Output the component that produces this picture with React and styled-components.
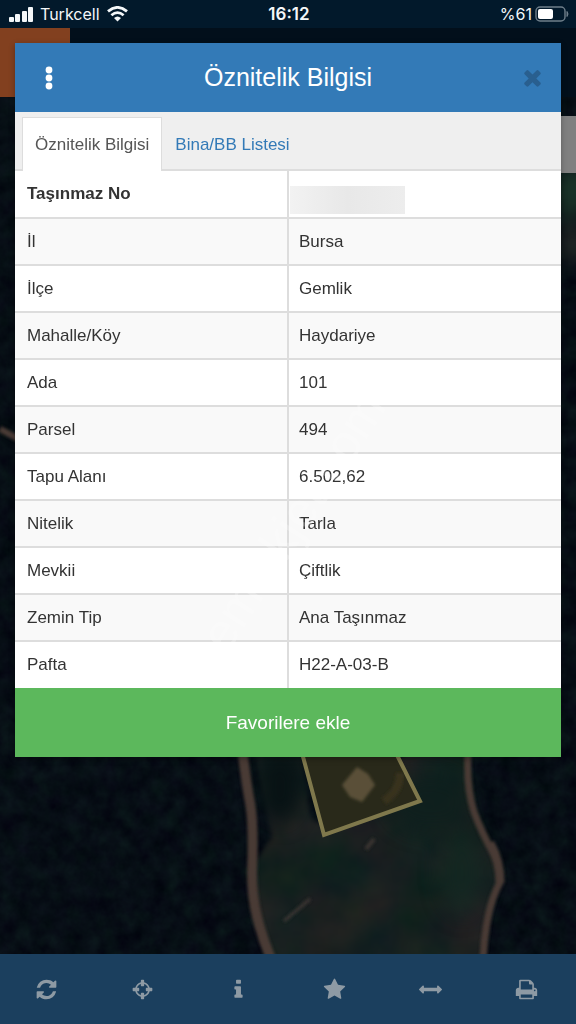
import React from "react";
import styled, { createGlobalStyle } from "styled-components";

const ROWS = [
	{ name: "Taşınmaz No", hidden: true },
	{ name: "İl", value: "Bursa" },
	{ name: "İlçe", value: "Gemlik" },
	{ name: "Mahalle/Köy", value: "Haydariye" },
	{ name: "Ada", value: "101" },
	{ name: "Parsel", value: "494" },
	{ name: "Tapu Alanı", value: "6.502,62" },
	{ name: "Nitelik", value: "Tarla" },
	{ name: "Mevkii", value: "Çiftlik" },
	{ name: "Zemin Tip", value: "Ana Taşınmaz" },
	{ name: "Pafta", value: "H22-A-03-B" },
];

const ICONS = {
	refresh:
		"M1639 1056q0 5-1 7-64 268-268 434.5t-478 166.5q-146 0-282.5-55t-243.5-157l-129 129q-19 19-45 19t-45-19-19-45v-448q0-26 19-45t45-19h448q26 0 45 19t19 45-19 45l-137 137q71 66 161 102t187 36q134 0 250-65t186-179q11-17 53-117 8-23 30-23h192q13 0 22.5 9.5t9.5 22.5zm25-800v448q0 26-19 45t-45 19h-448q-26 0-45-19t-19-45 19-45l138-138q-148-137-349-137-134 0-250 65t-186 179q-11 17-53 117-8 23-30 23h-199q-13 0-22.5-9.5t-9.5-22.5v-7q65-268 270-434.5t480-166.5q146 0 284 55.5t245 156.5l130-129q19-19 45-19t45 19 19 45z",
	crosshairs:
		"M1325 1024h-109q-26 0-45-19t-19-45v-128q0-26 19-45t45-19h109q-32-108-112.5-188.5t-188.5-112.5v109q0 26-19 45t-45 19h-128q-26 0-45-19t-19-45v-109q-108 32-188.5 112.5t-112.5 188.5h109q26 0 45 19t19 45v128q0 26-19 45t-45 19h-109q32 108 112.5 188.5t188.5 112.5v-109q0-26 19-45t45-19h128q26 0 45 19t19 45v109q108-32 188.5-112.5t112.5-188.5zm339-192v128q0 26-19 45t-45 19h-143q-37 161-154.5 278.5t-278.5 154.5v143q0 26-19 45t-45 19h-128q-26 0-45-19t-19-45v-143q-161-37-278.5-154.5t-154.5-278.5h-143q-26 0-45-19t-19-45v-128q0-26 19-45t45-19h143q37-161 154.5-278.5t278.5-154.5v-143q0-26 19-45t45-19h128q26 0 45 19t19 45v143q161 37 278.5 154.5t154.5 278.5h143q26 0 45 19t19 45z",
	info: "M1216 1344v128q0 26-19 45t-45 19h-512q-26 0-45-19t-19-45v-128q0-26 19-45t45-19h64v-384h-64q-26 0-45-19t-19-45v-128q0-26 19-45t45-19h384q26 0 45 19t19 45v576h64q26 0 45 19t19 45zm-128-1152v192q0 26-19 45t-45 19h-256q-26 0-45-19t-19-45v-192q0-26 19-45t45-19h256q26 0 45 19t19 45z",
	star: "M1728 647q0 22-26 48l-363 354 86 500q1 7 1 20 0 21-10.5 35.5t-30.5 14.5q-19 0-40-12l-449-236-449 236q-22 12-40 12-21 0-31.5-14.5t-10.5-35.5q0-6 2-20l86-500-364-354q-25-27-25-48 0-37 56-46l502-73 225-455q19-41 49-41t49 41l225 455 502 73q56 9 56 46z",
	arrows:
		"M1792 896q0 26-19 45l-256 256q-19 19-45 19t-45-19-19-45v-128h-1024v128q0 26-19 45t-45 19-45-19l-256-256q-19-19-19-45t19-45l256-256q19-19 45-19t45 19 19 45v128h1024v-128q0-26 19-45t45-19 45 19l256 256q19 19 19 45z",
	print:
		"M448 1536h896v-256h-896v256zm0-640h896v-384h-160q-40 0-68-28t-28-68v-160h-640v640zm1152 64q0-26-19-45t-45-19-45 19-19 45 19 45 45 19 45-19 19-45zm128 0v416q0 13-9.5 22.5t-22.5 9.5h-224v160q0 40-28 68t-68 28h-960q-40 0-68-28t-28-68v-160h-224q-13 0-22.5-9.5t-9.5-22.5v-416q0-79 56.5-135.5t135.5-56.5h64v-544q0-40 28-68t68-28h672q40 0 88 20t76 48l152 152q28 28 48 76t20 88v256h64q79 0 135.5 56.5t56.5 135.5z",
	times:
		"M1490 1322q0 40-28 68l-136 136q-28 28-68 28t-68-28l-294-294-294 294q-28 28-68 28t-68-28l-136-136q-28-28-28-68t28-68l294-294-294-294q-28-28-28-68t28-68l136-136q28-28 68-28t68 28l294 294 294-294q28-28 68-28t68 28l136 136q28 28 28 68t-28 68l-294 294 294 294q28 28 28 68z",
};

const TOOLS = [
	{ icon: "refresh", label: "Yenile" },
	{ icon: "crosshairs", label: "Konum" },
	{ icon: "info", label: "Bilgi" },
	{ icon: "star", label: "Favoriler" },
	{ icon: "arrows", label: "Ölçüm" },
	{ icon: "print", label: "Yazdır" },
];

function Icon({ name, size }) {
	return (
		<svg width={size} height={size} viewBox='0 0 1792 1792' fill='currentColor' aria-hidden='true'>
			<path d={ICONS[name]} />
		</svg>
	);
}

function Status() {
	return (
		<StatusBar>
			<Carrier>
				<svg width='24' height='15' viewBox='0 0 24 15' fill='currentColor'>
					<rect x='0' y='10' width='5' height='5' rx='1' />
					<rect x='6' y='7' width='5' height='8' rx='1' />
					<rect x='13' y='4' width='5' height='11' rx='1' />
					<rect x='19' y='0' width='5' height='15' rx='1' />
				</svg>
				<span>Turkcell</span>
				<svg width='21' height='16' viewBox='0 0 21 16' fill='none' stroke='currentColor'>
					<path d='M1 5.4Q10.5-2.6 20 5.4' strokeWidth='2.8' />
					<path d='M4.4 9.2Q10.5 4 16.6 9.2' strokeWidth='2.8' />
					<path d='M7 12Q10.5 8.800 14 12L10.5 15.600Z' fill='currentColor' stroke='none' />
				</svg>
			</Carrier>
			<Clock>16:12</Clock>
			<Battery>
				<span>%61</span>
				<svg width='34' height='16' viewBox='0 0 34 16'>
					<rect x='1' y='1' width='29' height='14' rx='4' fill='none' stroke='#6f7f8b' strokeWidth='1.4' />
					<rect x='3' y='3' width='15' height='10' rx='2' fill='#fff' />
					<path d='M32 5.5q2 2.500 0 5z' fill='#6f7f8b' stroke='#6f7f8b' />
				</svg>
			</Battery>
		</StatusBar>
	);
}

function SatelliteMap() {
	return (
		<MapSvg viewBox='0 0 576 857' preserveAspectRatio='xMidYMid slice' aria-hidden='true'>
			<defs>
				<filter id='trees' x='0' y='0' width='100%' height='100%' colorInterpolationFilters='sRGB'>
					<feTurbulence type='fractalNoise' baseFrequency='0.06' numOctaves='4' seed='8' />
					<feColorMatrix values='0.05 0 0 0 0  0.08 0.05 0 0 -0.012  0.07 0 0 0 0.045  0 0 0 0 1' />
				</filter>
				<filter id='ground' x='0' y='0' width='100%' height='100%' colorInterpolationFilters='sRGB'>
					<feTurbulence type='fractalNoise' baseFrequency='0.02' numOctaves='4' seed='3' />
					<feColorMatrix values='0.14 0 0 0 0.02  0.03 0.05 0 0 0.085  0.03 0 0.03 0 0.09  0 0 0 0 1' result='noise' />
					<feComposite in='noise' in2='SourceGraphic' operator='in' />
					<feGaussianBlur stdDeviation='2' />
				</filter>
				<filter id='soft' x='-20%' y='-20%' width='140%' height='140%'>
					<feGaussianBlur stdDeviation='1.5' />
				</filter>
				<filter id='softer' x='-50%' y='-50%' width='200%' height='200%' colorInterpolationFilters='sRGB'>
					<feGaussianBlur stdDeviation='10' />
				</filter>
			</defs>
			<rect width='576' height='857' filter='url(#trees)' />
			<path
				d='M252 640L300 650 310 720 330 735 410 650 468 655 474 715 492 752 500 785 490 815 483 870H270L254 810 252 770 272 740Z'
				filter='url(#ground)'
			/>
			<g filter='url(#softer)'>
				<ellipse cx='280' cy='690' rx='20' ry='36' fill='#071214' />
				<ellipse cx='430' cy='705' rx='42' ry='30' fill='#0c1f1d' opacity='0.8' />
				<ellipse cx='462' cy='775' rx='22' ry='44' fill='#132a22' opacity='0.7' />
				<ellipse cx='572' cy='95' rx='18' ry='28' fill='#1b3529' />
				<ellipse cx='572' cy='145' rx='12' ry='20' fill='#272b28' />
			</g>
			<g fill='none' stroke='#493b35' strokeLinejoin='round' filter='url(#soft)'>
				<path d='M242 650Q246 685 250 706T252 776Q252 800 257 820T271 862' strokeWidth='10' />
				<path d='M468 655Q466 690 474 715Q482 736 491 752T500 785Q492 800 488 820T483 862' strokeWidth='7' />
				<path d='M490 746Q500 764 500 786' strokeWidth='9' />
				<path d='M0 332L24 345' strokeWidth='6' />
				<path d='M284 824L310 802' strokeWidth='3' stroke='#3a3632' />
				<path d='M366 752L374 742' strokeWidth='4' stroke='#3a3632' />
			</g>
			<path d='M302 656L324 738 420 704 396 656Z' fill='#29291a' stroke='#7f784c' strokeWidth='4' />
			<path d='M357 670L368 677 375 688 362 705 350 700 342 688Z' fill='#5a5037' filter='url(#soft)' />
			<path d='M384 704Q400 694 400 676' fill='none' stroke='#38331f' strokeWidth='8' filter='url(#soft)' />
		</MapSvg>
	);
}

function App() {
	return (
		<Screen>
			<GlobalStyle />
			<Status />
			<Stage>
				<SiteHeader>
					<MenuBlock />
				</SiteHeader>
				<MapArea>
					<SatelliteMap />
					<MapControl />
				</MapArea>
				<Toolbar>
					{TOOLS.map((item) => (
						<ToolButton key={item.icon} aria-label={item.label}>
							<Icon name={item.icon} size={23} />
						</ToolButton>
					))}
				</Toolbar>
				<Dialog role='dialog' aria-labelledby='dialog-title'>
					<DialogHeader>
						<HeaderButton aria-label='Menü'>
							<svg width='8' height='24' viewBox='0 0 8 24' fill='currentColor'>
								<circle cx='4' cy='4' r='3.4' />
								<circle cx='4' cy='12' r='3.4' />
								<circle cx='4' cy='20' r='3.4' />
							</svg>
						</HeaderButton>
						<Title id='dialog-title'>Öznitelik Bilgisi</Title>
						<CloseButton aria-label='Kapat'>
							<Icon name='times' size={25} />
						</CloseButton>
					</DialogHeader>
					<Tabs role='tablist'>
						<Tab role='tab' aria-selected='true' $active>
							Öznitelik Bilgisi
						</Tab>
						<Tab role='tab' aria-selected='false'>
							Bina/BB Listesi
						</Tab>
					</Tabs>
					<Table>
						<tbody>
							{ROWS.map((row) => (
								<Row key={row.name}>
									<Name scope='row' $bold={row.hidden}>
										{row.name}
									</Name>
									<Value $hidden={row.hidden}>{row.hidden ? <Redacted /> : row.value}</Value>
								</Row>
							))}
						</tbody>
					</Table>
					<FavoriteButton>Favorilere ekle</FavoriteButton>
					<Watermark>emlakjet.com</Watermark>
				</Dialog>
			</Stage>
		</Screen>
	);
}

export default App;

const GlobalStyle = createGlobalStyle`
	* {
		box-sizing: border-box;
	}

	body {
		margin: 0;
		background: #050d13;
		font-family: "Liberation Sans", Arial, sans-serif;
	}

	button {
		margin: 0;
		padding: 0;
		border: 0;
		background: none;
		font-family: inherit;
		cursor: pointer;
	}
`;

const Screen = styled.div`
	display: flex;
	flex-direction: column;
	min-height: 100vh;
`;

const StatusBar = styled.div`
	display: grid;
	grid-template-columns: 1fr auto 1fr;
	align-items: center;
	height: 28px;
	padding: 0 7px 0 9px;
	background: #02192b;
	color: #f4f7f9;
	font-family: Inter, sans-serif;
	font-size: 16px;
`;

const Carrier = styled.div`
	display: flex;
	align-items: center;
	gap: 7px;
`;

const Clock = styled.div`
	font-size: 17px;
	font-weight: 600;
`;

const Battery = styled.div`
	display: flex;
	align-items: center;
	justify-content: flex-end;
	gap: 3px;
`;

const Stage = styled.div`
	position: relative;
	display: flex;
	flex-direction: column;
	flex: 1;
`;

const SiteHeader = styled.div`
	display: flex;
	height: 69px;
	background: #020f1b;
`;

const MenuBlock = styled.div`
	width: 70px;
	background: #82401f;
`;

const MapArea = styled.div`
	position: relative;
	flex: 1;
	overflow: hidden;
`;

const MapSvg = styled.svg`
	position: absolute;
	top: 0;
	left: 0;
	width: 100%;
	height: 100%;
`;

const MapControl = styled.div`
	position: absolute;
	top: 19px;
	right: 0;
	width: 56px;
	height: 57px;
	background: #808080;
`;

const Toolbar = styled.div`
	display: grid;
	grid-template-columns: repeat(6, 1fr);
	height: 70px;
	background: #1b3f5e;
`;

const ToolButton = styled.button`
	display: flex;
	align-items: center;
	justify-content: center;
	padding-right: 4px;
	color: #8e9aa4;
`;

const Dialog = styled.div`
	position: absolute;
	top: 15px;
	left: 15px;
	right: 15px;
	overflow: hidden;
	background: #fff;
	box-shadow: 0 2px 6px rgba(0, 0, 0, 0.3);
`;

const DialogHeader = styled.div`
	display: flex;
	align-items: center;
	height: 69px;
	padding: 0 9px;
	background: #337ab7;
`;

const HeaderButton = styled.button`
	display: flex;
	align-items: center;
	justify-content: center;
	width: 50px;
	height: 40px;
	color: #fff;
`;

const CloseButton = styled(HeaderButton)`
	padding-left: 10px;
	color: #295f8f;
`;

const Title = styled.h1`
	flex: 1;
	margin: 0;
	color: #fff;
	font-size: 25px;
	font-weight: 400;
	text-align: center;
`;

const Tabs = styled.div`
	display: flex;
	height: 59px;
	padding: 5px 7px 0;
	border-bottom: 2px solid #ddd;
	background: #efefef;
`;

const Tab = styled.button`
	height: 54px;
	padding: 0 12px;
	border: 1px solid ${(props) => (props.$active ? "#ddd" : "transparent")};
	border-bottom: 0;
	background: ${(props) => (props.$active ? "#fff" : "none")};
	color: ${(props) => (props.$active ? "#555" : "#337ab7")};
	font-size: 17px;
`;

const Table = styled.table`
	width: 100%;
	border-collapse: collapse;
	table-layout: fixed;
	color: #333;
	font-size: 17px;
`;

const Row = styled.tr`
	height: 47px;

	&:nth-child(even) {
		background: #f9f9f9;
	}

	&:not(:last-child) {
		border-bottom: 2px solid #ddd;
	}
`;

const Name = styled.th`
	padding: 0 12px;
	border-right: 2px solid #ddd;
	font-weight: ${(props) => (props.$bold ? 700 : 400)};
	text-align: left;
`;

const Value = styled.td`
	padding: ${(props) => (props.$hidden ? "0 1px 3px" : "0 10px")};
	vertical-align: ${(props) => (props.$hidden ? "bottom" : "middle")};
`;

const Redacted = styled.div`
	width: 115px;
	height: 28px;
	background: linear-gradient(90deg, #f2f2f2, #e8e8e8 50%, #ededed);
`;

const FavoriteButton = styled.button`
	display: block;
	width: 100%;
	height: 69px;
	background: #5cb85c;
	color: #fff;
	font-size: 19px;
`;

const Watermark = styled.div`
	position: absolute;
	top: 67%;
	left: 51%;
	transform: translate(-50%, -50%) rotate(-57deg);
	color: rgba(255, 255, 255, 0.25);
	font-size: 50px;
	pointer-events: none;
`;
